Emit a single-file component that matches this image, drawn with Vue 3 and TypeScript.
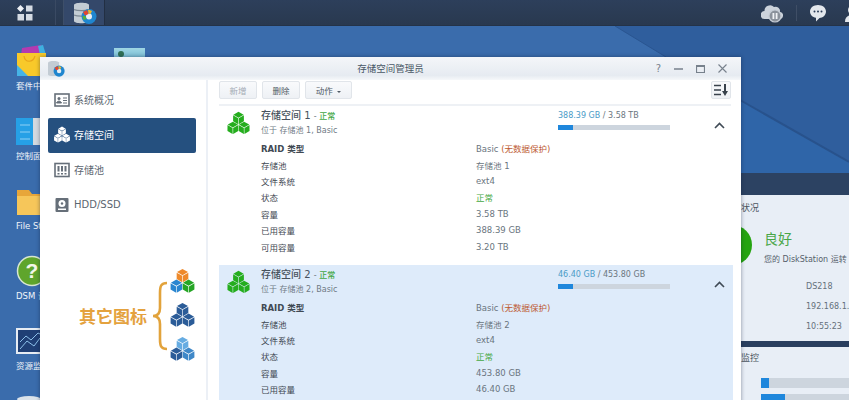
<script setup lang="ts">
type Face = { d: string; fill: string }

function stack(colors: string[]): Face[] {
  const centers = [
    [12, 6.8],
    [6.6, 16.2],
    [17.4, 16.2],
  ]
  const r = 6.3
  const w = 0.866 * r
  const out: Face[] = []
  centers.forEach(([x, y], i) => {
    const faces = [
      [[x, y - r], [x + w, y - r / 2], [x, y], [x - w, y - r / 2]],
      [[x - w, y - r / 2], [x, y], [x, y + r], [x - w, y + r / 2]],
      [[x + w, y - r / 2], [x, y], [x, y + r], [x + w, y + r / 2]],
    ]
    faces.forEach((f) => {
      const cx = f.reduce((a, p) => a + p[0], 0) / 4
      const cy = f.reduce((a, p) => a + p[1], 0) / 4
      const pts = f.map((p) => `${(cx + (p[0] - cx) * 0.9).toFixed(2)} ${(cy + (p[1] - cy) * 0.9).toFixed(2)}`)
      out.push({ d: `M${pts.join('L')}Z`, fill: colors[i] })
    })
  })
  return out
}

const green = ['#25ad1e', '#25ad1e', '#25ad1e']
const white = ['#fff', '#fff', '#fff']
const legend = [
  ['#ee8a2c', '#2a86d0', '#25a525'],
  ['#2b5c98', '#2b5c98', '#2b5c98'],
  ['#66ace2', '#2b5c98', '#3f88c8'],
]

const volumes = [
  {
    name: '存储空间 1',
    place: '位于 存储池 1, Basic',
    used: '388.39 GB',
    total: '3.58 TB',
    pct: 13.4,
    selected: false,
    pool: '存储池 1',
    cap: '3.58 TB',
    usedCap: '388.39 GB',
    free: '3.20 TB',
  },
  {
    name: '存储空间 2',
    place: '位于 存储池 2, Basic',
    used: '46.40 GB',
    total: '453.80 GB',
    pct: 13,
    selected: true,
    pool: '存储池 2',
    cap: '453.80 GB',
    usedCap: '46.40 GB',
    free: '',
  },
]

const desktopApps = ['套件中心', '控制面板', 'File Station', 'DSM 说明', '资源监控']
</script>

<template>
  <div class="screen">
    <header class="taskbar">
      <div class="menu-btn">
        <svg width="16" height="16" viewBox="0 0 16 16">
          <path d="M3.5 0L7 3.5L3.5 7L0 3.5Z" fill="#eef1f5" />
          <rect x="9" y="0.5" width="6.5" height="6" fill="#d5dbe3" />
          <rect x="0.5" y="9" width="6.5" height="6.5" fill="#d5dbe3" />
          <rect x="9" y="9" width="6.5" height="6.5" fill="#d5dbe3" />
        </svg>
      </div>
      <div class="app-tab">
        <svg width="23" height="22" viewBox="0 0 23 22">
          <path d="M0 3C0 0 15 0 15 3V19C15 22 0 22 0 19Z" fill="#c3ccd4" />
          <path d="M0 7.500C3 9 12 9 15 7.500M0 13C3 14.500 12 14.500 15 13" stroke="#7d8994" stroke-width="1.200" fill="none" />
          <circle cx="15" cy="14.500" r="7.500" fill="#1f86cf" />
          <circle cx="15" cy="14.500" r="3" fill="#e8eef4" />
          <path d="M9 10L13 8L14.500 12L11 13.500Z" fill="#e4452e" />
          <path d="M14 7.500L18 9L16.500 12L14.500 11.500Z" fill="#f4b82c" />
          <path d="M8.500 14L11.500 14L12.500 17L9.500 18Z" fill="#55b03a" />
        </svg>
      </div>
      <div class="tray">
        <svg width="22" height="20" viewBox="0 0 22 20">
          <path d="M4 16a4 4 0 0 1-.5-8A5.500 5.500 0 0 1 13 4a4.500 4.500 0 0 1 6 5a3.500 3.500 0 0 1-1 7Z" fill="#ccd3dc" />
          <circle cx="14" cy="13" r="6" fill="#8b929b" stroke="#c4cbd4" stroke-width="1.200" />
          <rect x="11.500" y="10" width="1.800" height="6" fill="#f0f2f5" />
          <rect x="14.700" y="10" width="1.800" height="6" fill="#f0f2f5" />
        </svg>
        <span class="tray-sep"></span>
        <svg width="18" height="18" viewBox="0 0 18 18">
          <path d="M9 1c4.500 0 8 2.800 8 6.500S13.500 14 10.500 14L7 17.500V13.800C3.500 13.200 1 10.800 1 7.500C1 3.800 4.500 1 9 1Z" fill="#e3e7ec" />
          <circle cx="5.500" cy="7.500" r="1" fill="#2a3c57" />
          <circle cx="9" cy="7.500" r="1" fill="#2a3c57" />
          <circle cx="12.500" cy="7.500" r="1" fill="#2a3c57" />
        </svg>
        <svg class="tray-user" width="16" height="18" viewBox="0 0 16 18">
          <circle cx="8" cy="6" r="5" fill="#e3e7ec" />
          <path d="M0 18c0-5 3-7 8-7s8 2 8 7Z" fill="#e3e7ec" />
        </svg>
      </div>
    </header>

    <main class="desktop">
      <svg class="wallpaper" width="849" height="374" viewBox="0 0 849 374">
        <path d="M615 0H849V136L666 31Z" fill="#2f5e9d" />
        <path d="M666 31L849 136V374H600V31Z" fill="#2f65a8" />
        <path d="M615 0L666 31" stroke="#2a5590" stroke-width="1" fill="none" />
        <path d="M740 74L849 136" stroke="#28528c" stroke-width="2" fill="none" />
      </svg>

      <ul class="apps">
        <li v-for="(app, i) in desktopApps" :key="app" class="app">
          <div class="app-icon">
            <svg v-if="i === 0" width="32" height="32" viewBox="0 0 32 32">
              <path d="M6 3L25 0L29 10L5 10Z" fill="#b43ab0" />
              <path d="M22 1L27 0L30 10L24 10Z" fill="#3fb0e0" />
              <path d="M1 8H30V31H1Z" fill="#f8c92a" />
              <path d="M1 20L12 31H1Z" fill="#46b4e6" />
              <path d="M8 11C9 18 17 18 19 11" stroke="#e8a51c" stroke-width="1.200" fill="none" />
            </svg>
            <svg v-else-if="i === 1" class="lift" width="32" height="27" viewBox="0 0 32 27">
              <rect width="32" height="27" fill="#26a0e6" />
              <rect x="17" width="15" height="27" fill="#d4d9df" />
              <path d="M4 7H14M4 14H14M4 21H14" stroke="#8ed0f5" stroke-width="1" />
            </svg>
            <svg v-else-if="i === 2" class="lift" width="32" height="27" viewBox="0 0 32 27">
              <path d="M1 2H13L16 6H32V27H1Z" fill="#e7a63a" />
              <path d="M1 8H32V27H1Z" fill="#f6c65a" />
            </svg>
            <svg v-else-if="i === 3" width="32" height="32" viewBox="0 0 32 32">
              <circle cx="16" cy="16" r="14.500" fill="#5fa52c" stroke="#d7e6d0" stroke-width="1.500" />
              <text x="16" y="23" text-anchor="middle" class="help-mark">?</text>
            </svg>
            <svg v-else class="lift-more" width="32" height="26" viewBox="0 0 32 26">
              <rect x="1" y="1" width="30" height="24" fill="#1f3f75" stroke="#e6ecf3" stroke-width="2" />
              <path d="M4 14L10 8L15 12L22 5L30 9M4 21L11 13L18 18L24 10L30 13" stroke="#8cc0ea" stroke-width="1" fill="none" />
            </svg>
          </div>
          <span class="app-label">{{ app }}</span>
        </li>
        <li class="app">
          <svg class="disk" width="26" height="6" viewBox="0 0 26 6">
            <ellipse cx="13" cy="4" rx="12" ry="3" fill="#dbe3ea" />
          </svg>
        </li>
      </ul>

      <div class="peek-icon"></div>

      <aside class="widget">
        <div class="strip tall"></div>
        <section class="panel status-panel">
          <h3 class="panel-title">状况</h3>
          <div class="status">
            <span class="status-dot"></span>
            <div class="status-text">
              <p class="good">良好</p>
              <p class="good-note">您的 DiskStation 运转</p>
            </div>
          </div>
          <dl class="facts">
            <dd>DS218</dd>
            <dd>192.168.1.</dd>
            <dd>10:55:23</dd>
          </dl>
        </section>
        <div class="strip"></div>
        <section class="panel">
          <h3 class="panel-title">监控</h3>
          <div class="meter"><span class="meter-fill short"></span></div>
          <div class="meter"><span class="meter-fill long"></span></div>
        </section>
      </aside>

      <div class="window">
        <div class="titlebar">
          <svg class="win-icon" width="17" height="17" viewBox="0 0 23 22">
            <path d="M0 3C0 0 15 0 15 3V19C15 22 0 22 0 19Z" fill="#c3ccd4" />
            <circle cx="15" cy="14.500" r="7.500" fill="#1f86cf" />
            <circle cx="15" cy="14.500" r="3" fill="#e8eef4" />
            <path d="M9 10L13 8L14.500 12L11 13.500Z" fill="#e4452e" />
            <path d="M14 7.500L18 9L16.500 12L14.500 11.500Z" fill="#f4b82c" />
          </svg>
          <span class="win-title">存储空间管理员</span>
          <div class="win-controls">
            <span class="ctl-help">?</span>
            <svg width="9" height="9" viewBox="0 0 9 9"><path d="M0 5H9" stroke="#77818c" stroke-width="1.500" /></svg>
            <svg width="9" height="9" viewBox="0 0 9 9"><path d="M.5 1.500H8.500V8.500H.5ZM.5 2.500H8.500" fill="none" stroke="#77818c" stroke-width="1.200" /></svg>
            <svg width="9" height="9" viewBox="0 0 9 9"><path d="M.5.500L8.500 8.500M8.500.500L.5 8.500" stroke="#77818c" stroke-width="1.100" /></svg>
          </div>
        </div>

        <div class="win-body">
          <nav class="sidebar">
            <a class="nav-item">
              <svg width="16" height="16" viewBox="0 0 16 16">
                <rect x="1" y="2" width="14" height="12" fill="none" stroke="#666f79" stroke-width="1.600" />
                <circle cx="5" cy="6.500" r="1.500" fill="#666f79" />
                <path d="M2.500 11C3 8.500 7 8.500 7.500 11ZM9 6H13M9 8.500H13M9 11H13" fill="#666f79" stroke="#666f79" stroke-width="1" />
              </svg>
              <span>系统概况</span>
            </a>
            <a class="nav-item active">
              <svg width="18" height="18" viewBox="0 0 24 24">
                <path v-for="f in stack(white)" :key="f.d" :d="f.d" :fill="f.fill" />
              </svg>
              <span>存储空间</span>
            </a>
            <a class="nav-item">
              <svg width="16" height="16" viewBox="0 0 16 16">
                <rect x="1" y="1.500" width="14" height="13" fill="none" stroke="#666f79" stroke-width="1.600" />
                <path d="M4.500 4V9.500M8 4V9.500M11.500 4V9.500" stroke="#666f79" stroke-width="2" />
                <path d="M4.500 11V12.500M8 11V12.500M11.500 11V12.500" stroke="#666f79" stroke-width="2" />
              </svg>
              <span>存储池</span>
            </a>
            <a class="nav-item">
              <svg width="16" height="16" viewBox="0 0 16 16">
                <rect x="1.500" y="1" width="13" height="14" rx="1" fill="#666f79" />
                <circle cx="8" cy="6.500" r="3.500" fill="#fff" />
                <circle cx="8" cy="6.500" r="1.200" fill="#666f79" />
                <rect x="4" y="11.500" width="8" height="1.500" fill="#fff" />
              </svg>
              <span>HDD/SSD</span>
            </a>

            <div class="legend">
              <span class="legend-text">其它图标</span>
              <svg class="brace" width="16" height="70" viewBox="0 0 16 70">
                <path d="M15 2C9 2 8 5 8 12V27C8 32 6 35 1 35C6 35 8 38 8 43V58C8 65 9 68 15 68" fill="none" stroke="#e2a33c" stroke-width="2.600" />
              </svg>
              <div class="legend-icons">
                <svg v-for="(c, i) in legend" :key="i" width="27" height="27" viewBox="0 0 24 24">
                  <path v-for="f in stack(c)" :key="f.d" :d="f.d" :fill="f.fill" />
                </svg>
              </div>
            </div>
          </nav>

          <section class="content">
            <div class="toolbar">
              <button class="btn disabled">新增</button>
              <button class="btn">删除</button>
              <button class="btn wide">动作 <i class="caret"></i></button>
              <button class="btn sort">
                <svg width="14" height="12" viewBox="0 0 14 12">
                  <path d="M0 1.500H7M0 6H7M0 10.500H7" stroke="#39424c" stroke-width="1.600" />
                  <path d="M11 0V8" stroke="#39424c" stroke-width="2" />
                  <path d="M8 7H14L11 12Z" fill="#39424c" />
                </svg>
              </button>
            </div>

            <article v-for="v in volumes" :key="v.name" class="volume" :class="{ selected: v.selected }">
              <svg class="vol-icon" width="25" height="25" viewBox="0 0 24 24">
                <path v-for="f in stack(green)" :key="f.d" :d="f.d" :fill="f.fill" />
              </svg>
              <div class="vol-main">
                <div class="vol-head">
                  <div class="vol-info">
                    <p class="vol-name">{{ v.name }} <small>- <em>正常</em></small></p>
                    <p class="vol-place">{{ v.place }}</p>
                  </div>
                  <div class="usage">
                    <p class="usage-text"><b>{{ v.used }}</b> / {{ v.total }}</p>
                    <div class="bar"><span class="bar-fill" :style="{ width: v.pct + '%' }"></span></div>
                  </div>
                  <svg class="chevron" width="11" height="7" viewBox="0 0 11 7">
                    <path d="M1 6L5.500 1.500L10 6" fill="none" stroke="#3f4a55" stroke-width="1.600" />
                  </svg>
                </div>
                <dl class="props">
                  <dt class="raid">RAID 类型</dt>
                  <dd>Basic <span class="warn">(无数据保护)</span></dd>
                  <dt>存储池</dt>
                  <dd>{{ v.pool }}</dd>
                  <dt>文件系统</dt>
                  <dd>ext4</dd>
                  <dt>状态</dt>
                  <dd class="ok">正常</dd>
                  <dt>容量</dt>
                  <dd>{{ v.cap }}</dd>
                  <dt>已用容量</dt>
                  <dd>{{ v.usedCap }}</dd>
                  <template v-if="v.free">
                    <dt>可用容量</dt>
                    <dd>{{ v.free }}</dd>
                  </template>
                </dl>
              </div>
            </article>
          </section>
        </div>
      </div>
    </main>
  </div>
</template>

<style>
html,
body {
  margin: 0;
  overflow: hidden;
}
</style>

<style scoped>
* {
  box-sizing: border-box;
}
p,
h3,
dl,
dd,
dt,
ul {
  margin: 0;
  padding: 0;
}
.screen {
  width: 849px;
  height: 400px;
  overflow: hidden;
  display: flex;
  flex-direction: column;
  font-family: "DejaVu Sans", "Noto Sans CJK SC", sans-serif;
  font-size: 9px;
  color: #55606b;
}
.taskbar {
  height: 26px;
  flex: none;
  display: flex;
  align-items: stretch;
  background: linear-gradient(#2d3f5b, #29394f);
  border-bottom: 1px solid #243348;
}
.menu-btn {
  width: 56px;
  padding-left: 17px;
  display: flex;
  align-items: center;
  border-right: 1px solid #3a4a63;
}
.app-tab {
  width: 42px;
  margin-left: 7px;
  padding-left: 10px;
  display: flex;
  align-items: center;
  background: #34486a;
  border-left: 1px solid #3e4f69;
  border-right: 1px solid #222f43;
}
.tray {
  margin-left: auto;
  display: flex;
  align-items: center;
  margin-right: -12px;
}
.tray-sep {
  width: 1px;
  height: 16px;
  margin: 0 12px 0 13px;
  background: #3f4e66;
}
.tray-user {
  margin-left: 18px;
}
.desktop {
  position: relative;
  flex: 1;
  background: #3a6cac;
  overflow: hidden;
}
.wallpaper {
  position: absolute;
  inset: 0;
}
.apps {
  position: relative;
  width: 64px;
  padding-top: 16px;
  list-style: none;
}
.app {
  height: 70px;
  display: flex;
  flex-direction: column;
  align-items: flex-start;
  padding-left: 16px;
}
.app-icon {
  height: 35px;
  display: flex;
  align-items: flex-end;
}
.lift {
  margin-bottom: 2px;
}
.lift-more {
  margin-bottom: 3px;
}
.disk {
  margin-top: 3px;
}
.app-label {
  margin-top: 3px;
  white-space: nowrap;
  color: #f1f5fa;
  font-size: 8.500px;
  line-height: 12px;
}
.help-mark {
  fill: #f3f7ea;
  font: bold 21px "Liberation Sans", sans-serif;
}
.peek-icon {
  position: absolute;
  left: 114px;
  top: 22px;
  width: 31px;
  height: 12px;
  background: linear-gradient(#9fd6e4, #6fb6cf);
}
.peek-icon::after {
  content: "";
  position: absolute;
  left: 4px;
  top: 3px;
  width: 6px;
  height: 6px;
  border-radius: 50%;
  background: #2f6f55;
}
.widget {
  position: absolute;
  left: 720px;
  top: 147px;
  width: 140px;
  bottom: 0;
  display: flex;
  flex-direction: column;
  background: #e8eef6;
}
.strip {
  height: 6px;
  flex: none;
  background: #2a3f5f;
}
.strip.tall {
  height: 22px;
  background: #2c4262;
}
.panel {
  padding: 5px 0 0 21px;
  flex: none;
}
.status-panel {
  height: 146px;
  padding-top: 7px;
}
.panel-title {
  font-size: 9px;
  font-weight: 400;
  color: #4b5560;
  line-height: 12px;
}
.status {
  display: flex;
  gap: 12px;
  margin-top: 9px;
  margin-left: -29px;
}
.status-dot {
  width: 40px;
  height: 40px;
  margin-top: 2px;
  border-radius: 50%;
  background: #25a410;
  flex: none;
}
.status-text {
  padding-top: 6px;
}
.good {
  font-size: 14px;
  line-height: 20px;
  color: #4aa648;
}
.good-note {
  margin-top: 5px;
  white-space: nowrap;
  font-size: 8px;
  line-height: 12px;
}
.facts {
  margin: 11px 0 0 65px;
}
.facts dd {
  height: 20px;
  line-height: 20px;
  white-space: nowrap;
  font-size: 8px;
  color: #65707b;
}
.meter {
  height: 10px;
  margin: 14px 0 -8px 20px;
  background: #cdd5de;
}
.meter-fill {
  display: block;
  height: 100%;
  background: #1f87dc;
}
.meter-fill.short {
  width: 8px;
}
.meter-fill.long {
  width: 24px;
}
.window {
  position: absolute;
  left: 40px;
  top: 31px;
  width: 701px;
  height: 400px;
  display: flex;
  flex-direction: column;
  background: #fff;
  box-shadow: 0 0 4px rgba(10, 25, 50, 0.45);
}
.titlebar {
  height: 23px;
  flex: none;
  position: relative;
  display: flex;
  align-items: center;
  justify-content: center;
  padding-bottom: 2px;
  background: linear-gradient(#f4f6f9, #e6ebf1 80%, #f6f8fa);
}
.win-icon {
  position: absolute;
  left: 8px;
  top: 3px;
}
.win-title {
  font-size: 9.500px;
  color: #485765;
}
.win-controls {
  position: absolute;
  right: 14px;
  top: 7px;
  display: flex;
  align-items: center;
  gap: 13px;
}
.ctl-help {
  font-size: 10px;
  line-height: 9px;
  color: #77818c;
}
.win-body {
  flex: 1;
  display: flex;
  min-height: 0;
}
.sidebar {
  width: 168px;
  flex: none;
  padding: 3px 10px 0 8px;
  border-right: 2px solid #ecf0f6;
}
.nav-item {
  height: 35px;
  display: flex;
  align-items: center;
  gap: 4px;
  padding: 0 0 2px 6px;
  font-size: 10px;
  color: #5c6670;
  border-radius: 2px;
}
.nav-item.active {
  background: #25507f;
  color: #fff;
}
.nav-item svg {
  flex: none;
}
.nav-item.active svg {
  margin: 0 -1px;
}
.legend {
  margin: 45px 0 0 31px;
  display: flex;
  align-items: center;
}
.legend-text {
  font-size: 17px;
  font-weight: 700;
  color: #e4a23e;
  white-space: nowrap;
  width: 76px;
}
.brace {
  flex: none;
}
.legend-icons {
  display: flex;
  flex-direction: column;
  gap: 7px;
  margin-left: 1px;
}
.content {
  flex: 1;
  padding: 0 8px 0 11px;
  min-width: 0;
}
.toolbar {
  height: 26px;
  padding-top: 1px;
  display: flex;
  gap: 5px;
  border-bottom: 2px solid #eef1f5;
  margin-right: 2px;
}
.btn {
  width: 38px;
  height: 18px;
  padding: 0;
  font: inherit;
  font-size: 8.500px;
  color: #505a65;
  background: linear-gradient(#f9fafc, #eef1f5);
  border: 1px solid #e1e5ea;
  border-radius: 2px;
}
.btn.disabled {
  color: #a4acb5;
}
.btn.wide {
  width: 47px;
}
.btn.sort {
  width: 20px;
  margin-left: auto;
  display: flex;
  align-items: center;
  justify-content: center;
}
.caret {
  display: inline-block;
  margin-left: 2px;
  vertical-align: middle;
  border: 2.500px solid transparent;
  border-top-color: #505a65;
  border-bottom: 0;
}
.volume {
  height: 159px;
  display: flex;
  padding: 3px 0 0 7px;
}
.volume.selected {
  background: #deebfa;
}
.vol-icon {
  flex: none;
  margin-top: 2px;
}
.vol-main {
  flex: 1;
  margin-left: 10px;
}
.vol-head {
  height: 31px;
  display: flex;
}
.vol-info {
  width: 297px;
}
.vol-name {
  line-height: 14px;
  font-size: 10px;
  color: #47525d;
  font-weight: 500;
}
.vol-name small {
  font-size: 8px;
  color: #6b7680;
}
.vol-name em {
  font-style: normal;
  color: #45a845;
}
.vol-place {
  line-height: 14px;
  font-size: 8px;
  color: #6f7a85;
}
.usage {
  width: 112px;
  flex: none;
}
.usage-text {
  line-height: 14px;
  font-size: 8px;
  color: #6b7680;
  white-space: nowrap;
}
.usage-text b {
  font-weight: 400;
  color: #4b9bc7;
}
.bar {
  height: 5px;
  margin-top: 2px;
  background: #cdd5de;
}
.bar-fill {
  display: block;
  height: 100%;
  background: #1f87dc;
}
.chevron {
  margin: 13px 0 0 44px;
  flex: none;
}
.props {
  display: grid;
  grid-template-columns: 215px 1fr;
  grid-auto-rows: 16.400px;
  align-items: center;
  font-size: 8.500px;
}
.props dt {
  color: #3f4953;
}
.props dt.raid {
  font-weight: 700;
}
.props dd {
  color: #6a7580;
}
.warn {
  color: #bd5a32;
}
.props dd.ok {
  color: #45a845;
}
</style>
